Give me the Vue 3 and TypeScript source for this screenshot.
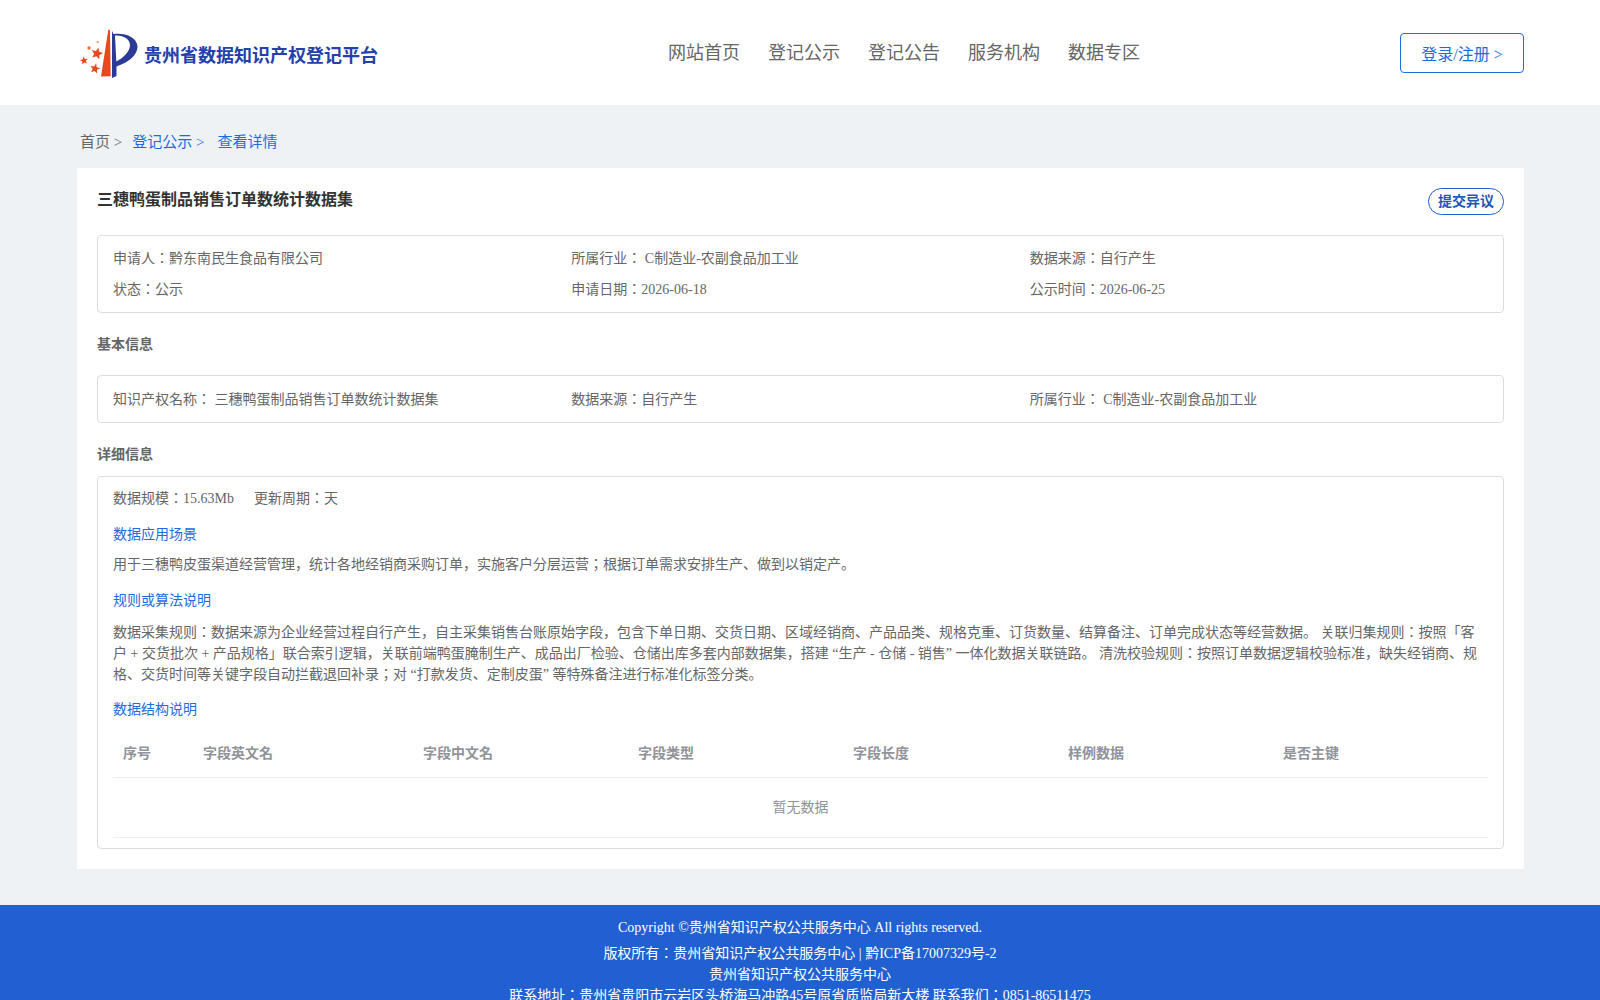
<script setup lang="ts">
const navs: string[] = ['网站首页', '登记公示', '登记公告', '服务机构', '数据专区']
const cols: string[] = ['序号', '字段英文名', '字段中文名', '字段类型', '字段长度', '样例数据', '是否主键']

function star(cx: number, cy: number, r: number, rot: number): string {
  const pts: string[] = []
  for (let i = 0; i < 10; i++) {
    const rad = i % 2 === 0 ? r : r * 0.45
    const a = ((-90 + rot + i * 36) * Math.PI) / 180
    pts.push(`${(cx + rad * Math.cos(a)).toFixed(2)},${(cy + rad * Math.sin(a)).toFixed(2)}`)
  }
  return pts.join(' ')
}
const stars: string[] = [star(19, 26.5, 6.2, 14), star(6, 33.7, 4.2, -10), star(17, 41.7, 5.2, 12)]
</script>

<template>
  <div class="page">
    <header class="header">
      <div class="brand">
        <svg class="logo" width="60" height="52" viewBox="0 0 60 52">
          <path d="M23 49.5 L30.3 2.7 L32 2.7 L32.7 49.2 Z" fill="#e8481c" />
          <path fill-rule="evenodd" d="M34 4 L34 51 L38.5 49 L38.5 39.5 C50 35.5 60 28 59.5 19 C58.5 10 47 5.5 35.5 7 L34 4 Z M37 8.5 C46 8 52 12.5 52 18 C52 25 45 31 38.3 34.5 Z" fill="#2b3a94" />
          <polygon v-for="(s, i) in stars" :key="i" :points="s" fill="#e8481c" />
          <circle cx="11" cy="21" r="1.7" fill="#ee6a3c" />
          <circle cx="19.7" cy="15" r="1.1" fill="#ee8a60" />
        </svg>
        <span class="brand-name">贵州省数据知识产权登记平台</span>
      </div>
      <nav class="nav">
        <a v-for="n in navs" :key="n" class="nav-item">{{ n }}</a>
      </nav>
      <button class="login">登录/注册 &gt;</button>
    </header>

    <main class="main">
      <div class="crumbs">
        <span class="c-home">首页 &gt;</span>
        <span class="c-link">登记公示 &gt;</span>
        <span class="c-cur">查看详情</span>
      </div>

      <section class="card">
        <div class="title-row">
          <h1 class="title">三穗鸭蛋制品销售订单数统计数据集</h1>
          <span class="objection">提交异议</span>
        </div>

        <div class="box summary">
          <span>申请人：黔东南民生食品有限公司</span>
          <span>所属行业： C制造业-农副食品加工业</span>
          <span>数据来源：自行产生</span>
          <span>状态：公示</span>
          <span>申请日期：2026-06-18</span>
          <span>公示时间：2026-06-25</span>
        </div>

        <h2 class="sec basic-h">基本信息</h2>
        <div class="box basic">
          <span>知识产权名称： 三穗鸭蛋制品销售订单数统计数据集</span>
          <span>数据来源：自行产生</span>
          <span>所属行业： C制造业-农副食品加工业</span>
        </div>

        <h2 class="sec detail-h">详细信息</h2>
        <div class="box detail">
          <div class="meta"><span>数据规模：15.63Mb</span><span>更新周期：天</span></div>
          <div class="sub first">数据应用场景</div>
          <p class="para one">用于三穗鸭皮蛋渠道经营管理，统计各地经销商采购订单，实施客户分层运营；根据订单需求安排生产、做到以销定产。</p>
          <div class="sub second">规则或算法说明</div>
          <p class="para two">数据采集规则：数据来源为企业经营过程自行产生，自主采集销售台账原始字段，包含下单日期、交货日期、区域经销商、产品品类、规格克重、订货数量、结算备注、订单完成状态等经营数据。 关联归集规则：按照「客户 + 交货批次 + 产品规格」联合索引逻辑，关联前端鸭蛋腌制生产、成品出厂检验、仓储出库多套内部数据集，搭建 “生产 - 仓储 - 销售” 一体化数据关联链路。 清洗校验规则：按照订单数据逻辑校验标准，缺失经销商、规格、交货时间等关键字段自动拦截退回补录；对 “打款发货、定制皮蛋” 等特殊备注进行标准化标签分类。</p>
          <div class="sub third">数据结构说明</div>
          <div class="table">
            <div class="thead">
              <span v-for="c in cols" :key="c" class="th">{{ c }}</span>
            </div>
            <div class="empty">暂无数据</div>
          </div>
        </div>
      </section>
    </main>

    <footer class="footer">
      <div class="copy">Copyright ©贵州省知识产权公共服务中心 All rights reserved.</div>
      <div>版权所有：贵州省知识产权公共服务中心 | 黔ICP备17007329号-2</div>
      <div>贵州省知识产权公共服务中心</div>
      <div>联系地址：贵州省贵阳市云岩区头桥海马冲路45号原省质监局新大楼 联系我们：0851-86511475</div>
    </footer>
  </div>
</template>

<style>
html, body { margin: 0; background: #eff2f5; }
</style>

<style scoped>
.page {
  height: 1000px;
  overflow: hidden;
  background: #eff2f5;
  font-family: "Liberation Serif", "Noto Sans CJK JP", serif;
  font-size: 14px;
  color: #666;
}
.header {
  height: 105px;
  background: #fff;
  box-sizing: border-box;
  padding: 0 76px 0 77px;
  display: grid;
  grid-template-columns: 591px auto 1fr;
  align-items: center;
}
.brand { display: flex; align-items: center; gap: 6px; }
.logo { margin-left: 1px; flex: none; }
.brand-name { color: #2440ac; font-size: 18px; font-weight: 700; margin-top: 3px; }
.nav { display: flex; gap: 28px; font-size: 18px; color: #666; margin-top: -3px; }
.login {
  justify-self: end;
  width: 124px;
  height: 40px;
  background: #fff;
  border: 1px solid #1e6be0;
  border-radius: 4px;
  color: #1e6be0;
  font: inherit;
  font-size: 16px;
  padding: 0;
}
.main { padding: 0 76px 0 77px; }
.crumbs {
  height: 63px;
  box-sizing: border-box;
  padding: 27px 0 0 3px;
  display: flex;
  font-size: 15px;
  line-height: 20px;
}
.c-home { margin-right: 10px; color: #666; }
.c-link { margin-right: 13px; color: #1e6be0; }
.c-cur { color: #1e6be0; }
.card {
  background: #fff;
  height: 701px;
  box-sizing: border-box;
  padding: 20px;
}
.title-row { display: flex; justify-content: space-between; align-items: flex-start; height: 47px; }
.title { margin: 0; font-size: 16px; line-height: 24px; font-weight: 700; color: #333; }
.objection {
  box-sizing: border-box;
  height: 27px;
  line-height: 25px;
  width: 76px;
  text-align: center;
  border: 1px solid #1e5fce;
  border-radius: 14px;
  color: #1e55b8;
  font-weight: 700;
}
.box {
  border: 1px solid #ddd;
  border-radius: 4px;
  box-sizing: border-box;
  padding: 0 15px;
  line-height: 20px;
}
.summary {
  height: 78px;
  display: grid;
  grid-template-columns: repeat(3, 1fr);
  row-gap: 10.5px;
  padding-top: 13px;
  align-content: start;
}
.sec { margin: 0; font-size: 14px; line-height: 20px; font-weight: 700; color: #666; }
.basic-h { margin-top: 22px; }
.basic {
  margin-top: 20px;
  height: 48px;
  display: grid;
  grid-template-columns: repeat(3, 1fr);
  align-items: center;
  padding-top: 2px;
}
.detail-h { margin-top: 22px; }
.detail { margin-top: 11px; height: 373px; padding-top: 12px; }
.meta { display: flex; gap: 20px; }
.sub { color: #1e6be0; line-height: 20px; }
.sub.first { margin-top: 16px; }
.sub.second { margin-top: 16px; }
.sub.third { margin-top: 15px; }
.para { line-height: 21px; }
.para.one { margin: 9px 0 0; }
.para.two { margin: 11px 0 0; }
.table { margin-top: 9px; }
.thead {
  display: grid;
  grid-template-columns: 80px 220px repeat(5, 215px);
  height: 49px;
  align-items: center;
  border-bottom: 1px solid #ebeef5;
  box-sizing: border-box;
}
.th { padding: 2px 0 0 10px; font-weight: 700; color: #909399; }
.empty {
  height: 60px;
  line-height: 60px;
  text-align: center;
  color: #909399;
  border-bottom: 1px solid #ebeef5;
  box-sizing: border-box;
}
.footer {
  margin-top: 36px;
  background: #2160d0;
  color: #fff;
  text-align: center;
  line-height: 21px;
  padding-top: 12px;
  height: 120px;
  box-sizing: border-box;
}
.copy { margin-bottom: 5px; }
</style>
